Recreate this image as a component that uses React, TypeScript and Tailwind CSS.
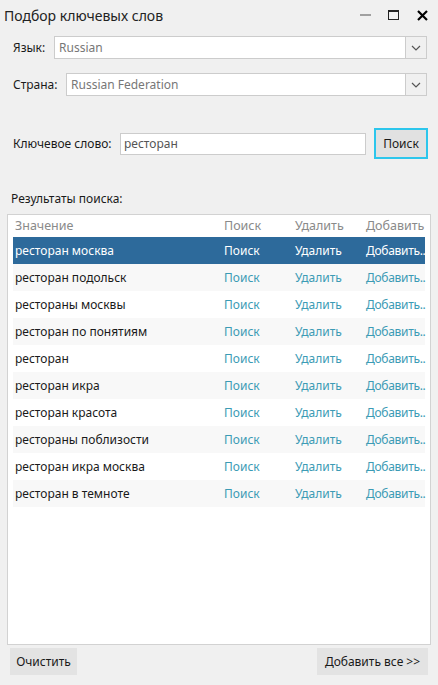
const rows = [
  'ресторан москва',
  'ресторан подольск',
  'рестораны москвы',
  'ресторан по понятиям',
  'ресторан',
  'ресторан икра',
  'ресторан красота',
  'рестораны поблизости',
  'ресторан икра москва',
  'ресторан в темноте',
];

function Chevron() {
  return (
    <svg width="10" height="6" viewBox="0 0 10 6" fill="none">
      <path d="M1 1l4 4 4-4" stroke="#555" strokeWidth="1.2" />
    </svg>
  );
}

function Select({ value, className }: { value: string; className: string }) {
  return (
    <div className={`flex h-[23px] border border-[#cccccc] bg-white ${className}`}>
      <div className="flex flex-1 items-center pl-[4px] text-[12px] text-[#777777]">{value}</div>
      <div className="flex w-[21px] items-center justify-center border-l border-[#cccccc] bg-[#f0f0f0]">
        <Chevron />
      </div>
    </div>
  );
}

export default function App() {
  return (
    <div className="flex h-[685px] w-[438px] flex-col bg-[#f0f0f0] font-['Noto_Sans',sans-serif] text-[#1a1a1a]">
      {/* title bar */}
      <div className="flex h-[30px] items-center pl-[4px]">
        <span className="flex-1 text-[14px] text-[#222]">Подбор ключевых слов</span>
        <div className="flex items-center">
          <div className="mr-[17px] h-[1.5px] w-[11px] bg-[#a0a0a0]" />
          <div className="mr-[18px] h-[10px] w-[11px] border border-t-[2.5px] border-[#222]" />
          <svg width="11" height="11" viewBox="0 0 11 11" className="mr-[10px]">
            <path d="M1 1l9 9M10 1l-9 9" stroke="#000" strokeWidth="2.2" />
          </svg>
        </div>
      </div>

      {/* language */}
      <div className="mt-[6px] flex items-center pr-[11px]">
        <span className="w-[54px] pl-[13px] text-[12px]">Язык:</span>
        <Select value="Russian" className="flex-1" />
      </div>

      {/* country */}
      <div className="mt-[14px] flex items-center pr-[11px]">
        <span className="w-[66px] pl-[13px] text-[12px]">Страна:</span>
        <Select value="Russian Federation" className="flex-1" />
      </div>

      {/* keyword */}
      <div className="mt-[32px] flex h-[31px] items-center pr-[10px]">
        <span className="w-[120px] pl-[13px] text-[12px]">Ключевое слово:</span>
        <div className="flex h-[22px] w-[246px] items-center border border-[#cccccc] bg-white pl-[3px] text-[12px] text-[#555]">
          ресторан
        </div>
        <button className="ml-[8px] flex h-[31px] w-[54px] items-center justify-center border-2 border-[#2cc6ec] bg-[#e1e1e1] text-[12px]">
          Поиск
        </button>
      </div>

      {/* results label */}
      <div className="mt-[32px] flex h-[16px] items-center pl-[11px] text-[12px]">Результаты поиска:</div>

      {/* results table */}
      <div className="mx-[7px] mt-[7px] flex h-[431px] flex-col border border-[#d2d2d2] bg-white px-[5px]">
        <div className="flex h-[22px] items-center text-[12.5px] text-[#8a8a8a]">
          <span className="w-[209px] shrink-0 pl-[2px]">Значение</span>
          <span className="w-[71px] shrink-0 pl-[2px]">Поиск</span>
          <span className="w-[71px] shrink-0 pl-[2px]">Удалить</span>
          <span className="min-w-0 flex-1 whitespace-nowrap pl-[2px]">Добавить</span>
        </div>
        {rows.map((r, i) => {
          const sel = i === 0;
          const bg = sel ? 'bg-[#2d6a9b] text-white' : i % 2 === 1 ? 'bg-[#f8f8f8]' : 'bg-white';
          const link = sel ? 'text-white' : 'text-[#3c9bb5]';
          return (
            <div key={i} className={`flex h-[27px] items-center text-[12px] ${bg}`}>
              <span className="w-[209px] shrink-0 pl-[2px]">{r}</span>
              <span className={`w-[71px] shrink-0 pl-[2px] ${link}`}>Поиск</span>
              <span className={`w-[71px] shrink-0 pl-[2px] ${link}`}>Удалить</span>
              <span className={`min-w-0 flex-1 whitespace-nowrap pl-[2px] tracking-[-0.3px] ${link}`}>Добавить..</span>
            </div>
          );
        })}
      </div>

      {/* bottom buttons */}
      <div className="mt-[3px] flex justify-between pl-[10px] pr-[10px]">
        <button className="h-[27px] w-[67px] bg-[#e3e3e3] text-[12px]">Очистить</button>
        <button className="h-[27px] w-[111px] bg-[#e3e3e3] text-[12px]">Добавить все &gt;&gt;</button>
      </div>
    </div>
  );
}
